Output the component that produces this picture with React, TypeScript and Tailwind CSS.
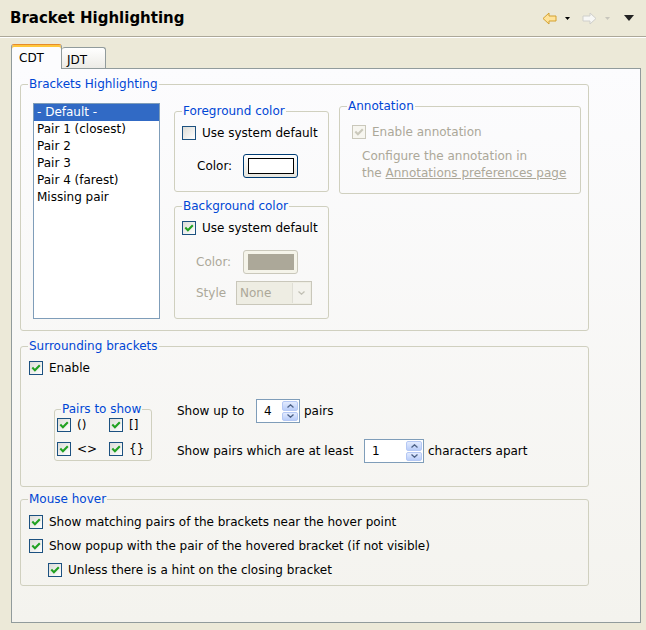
import type { ReactNode } from "react";
import clsx from "clsx";

const Box = ({ checked, disabled }: { checked?: boolean; disabled?: boolean }) => (
  <span
    className={clsx(
      "w-[14px] h-[14px] border flex items-center justify-center shrink-0",
      disabled
        ? "border-[#cac8bb] bg-[#f7f6f0]"
        : "border-[#1c5180] bg-gradient-to-br from-[#dcdcd7] to-white"
    )}
  >
    {checked && (
      <svg width="10" height="10" viewBox="0 0 10 10">
        <path
          d="M1.3 4.6 L3.9 7.2 L8.8 2.2"
          stroke={disabled ? "#cac8bb" : "#21a121"}
          strokeWidth="2.1"
          fill="none"
        />
      </svg>
    )}
  </span>
);

const CheckRow = ({
  label,
  checked = true,
  disabled,
  className,
}: {
  label: ReactNode;
  checked?: boolean;
  disabled?: boolean;
  className?: string;
}) => (
  <label className={clsx("flex items-center h-4 gap-[6px]", disabled && "text-[#aca899]", className)}>
    <Box checked={checked} disabled={disabled} />
    <span>{label}</span>
  </label>
);

const Group = ({
  title,
  className,
  legendClass,
  children,
}: {
  title: string;
  className?: string;
  legendClass?: string;
  children: ReactNode;
}) => (
  <fieldset className={clsx("border border-[#d0d0bf] rounded-[3px]", className)}>
    <legend className={clsx("px-px leading-4 text-[#0046d5]", legendClass)}>{title}</legend>
    {children}
  </fieldset>
);

const Chevron = ({ up, color = "#4d6185" }: { up?: boolean; color?: string }) => (
  <svg width="7" height="4" viewBox="0 0 7 4">
    <path d={up ? "M0.5 3.5 L3.5 0.8 L6.5 3.5" : "M0.5 0.5 L3.5 3.2 L6.5 0.5"} stroke={color} strokeWidth="1.3" fill="none" />
  </svg>
);

const Spinner = ({ value, width }: { value: string; width: string }) => (
  <div className={clsx("flex h-[24px] border border-[#7f9db9] bg-white", width)}>
    <span className="flex-1 flex items-center pl-[7px]">{value}</span>
    <div className="flex flex-col w-[17px] py-px pr-px gap-px">
      <span className="flex-1 flex items-center justify-center rounded-[2px] border border-[#b5c8f4] bg-gradient-to-b from-[#e3ebfe] to-[#b9cdf9]">
        <Chevron up />
      </span>
      <span className="flex-1 flex items-center justify-center rounded-[2px] border border-[#b5c8f4] bg-gradient-to-b from-[#e3ebfe] to-[#b9cdf9]">
        <Chevron />
      </span>
    </div>
  </div>
);

const ColorButton = ({ disabled }: { disabled?: boolean }) => (
  <div
    className={clsx(
      "w-[55px] h-[24px] rounded-[3px] border flex items-center justify-center",
      disabled ? "border-[#cac8bb] bg-[#f5f4ea]" : "border-[#003c74] bg-gradient-to-b from-white to-[#e6e5de]"
    )}
  >
    <span
      className={clsx(
        "w-[46px] h-[16px]",
        disabled ? "bg-[#aca899]" : "border border-black bg-white"
      )}
    />
  </div>
);

const items = ["- Default -", "Pair 1 (closest)", "Pair 2", "Pair 3", "Pair 4 (farest)", "Missing pair"];

export default function App() {
  return (
    <div className="w-[646px] h-[630px] bg-[#ece9d8] flex flex-col font-['DejaVu_Sans',sans-serif] text-[12px] text-black overflow-hidden">
      <header className="h-[36px] flex items-center justify-between pl-[10px] pr-[12px] shrink-0">
        <h1 className="text-[15px] font-bold">Bracket Highlighting</h1>
        <div className="flex items-center">
          <svg width="15" height="13" viewBox="0 0 15 13">
            <path d="M1 6.5 L7 1 L7 4 L14 4 L14 9 L7 9 L7 12 Z" fill="#ffe39a" stroke="#d3a131" strokeWidth="1" />
          </svg>
          <svg width="5" height="3" viewBox="0 0 5 3" className="ml-[8px]">
            <path d="M0 0 L5 0 L2.5 3 Z" fill="#000" />
          </svg>
          <svg width="15" height="13" viewBox="0 0 15 13" className="ml-[12px]">
            <path d="M14 6.5 L8 1 L8 4 L1 4 L1 9 L8 9 L8 12 Z" fill="#f7f7f5" stroke="#cfcfcb" strokeWidth="1" />
          </svg>
          <svg width="5" height="3" viewBox="0 0 5 3" className="ml-[8px]">
            <path d="M0 0 L5 0 L2.5 3 Z" fill="#c8c6bd" />
          </svg>
          <svg width="10" height="6" viewBox="0 0 10 6" className="ml-[14px]">
            <path d="M0 0 L10 0 L5 6 Z" fill="#222" />
          </svg>
        </div>
      </header>
      <div className="h-0 border-t border-[#aca899] border-b border-b-white shrink-0" />

      <div className="flex items-end ml-[11px] mt-[5px] h-[25px] relative z-10">
        <div className="w-[51px] h-[25px] -mb-px rounded-t-[3px] border border-b-0 border-[#919b9c] border-t-[#e68b2c] shadow-[inset_0_2px_0_#ffc73c] bg-[#fcfcfe] pl-[7px] pt-[5px] leading-4">
          CDT
        </div>
        <div className="w-[44px] h-[21px] rounded-t-[3px] border border-b-0 border-l-0 border-[#919b9c] bg-gradient-to-b from-white to-[#ecebe6] pl-[5px] pt-[4px] leading-4">
          JDT
        </div>
      </div>

      <div className="ml-[11px] w-[630px] h-[555px] border border-[#919b9c] bg-gradient-to-b from-[#fcfcfe] to-[#f4f3ee] pl-[8px] pt-[7px]">
        <Group title="Brackets Highlighting" className="w-[569px] pl-[12px] pb-[11px]" legendClass="-ml-[5px]">
          <div className="flex items-start mt-[6px]">
            <div className="mt-[5px] w-[127px] h-[216px] border border-[#7f9db9] bg-white">
              {items.map((t, i) => (
                <div key={t} className={clsx("leading-[17px] pl-[3px]", i === 0 && "bg-[#316ac5] text-white")}>
                  {t}
                </div>
              ))}
            </div>

            <div className="ml-[14px] mt-[5px] w-[155px] flex flex-col">
              <Group title="Foreground color" className="pl-[7px] pb-[13px]">
                <CheckRow label="Use system default" checked={false} className="mt-[6px]" />
                <div className="flex items-center mt-[13px] pl-[15px]">
                  <span className="w-[46px]">Color:</span>
                  <ColorButton />
                </div>
              </Group>
              <Group title="Background color" className="mt-[6px] pl-[7px] pb-[13px]">
                <CheckRow label="Use system default" className="mt-[6px]" />
                <div className="flex items-center mt-[14px] pl-[14px] text-[#aca899]">
                  <span className="w-[47px]">Color:</span>
                  <ColorButton disabled />
                </div>
                <div className="flex items-center mt-[7px] pl-[14px] text-[#aca899]">
                  <span className="w-[40px]">Style</span>
                  <div className="flex w-[76px] h-[24px] border border-[#c9c7ba] bg-[#eeede3]">
                    <span className="flex-1 flex items-center pl-[3px]">None</span>
                    <span className="w-[18px] my-px mr-px flex items-center justify-center bg-[#f3f2ec] border-l border-[#dfded5]">
                      <Chevron color="#c2c0b5" />
                    </span>
                  </div>
                </div>
              </Group>
            </div>

            <Group title="Annotation" className="ml-[10px] w-[242px] pl-[12px] pb-[11px]" legendClass="-ml-[5px]">
              <CheckRow label="Enable annotation" disabled className="mt-[10px]" />
              <div className="mt-[8px] pl-[10px] leading-[17px] text-[#aca899]">
                <div>Configure the annotation in</div>
                <div>
                  the <span className="underline">Annotations preferences page</span>
                </div>
              </div>
            </Group>
          </div>
        </Group>

        <Group title="Surrounding brackets" className="mt-[7px] w-[569px] pl-[8px] pb-[23px]" legendClass="-ml-px">
          <CheckRow label="Enable" className="mt-[6px]" />
          <div className="flex items-start mt-[23px]">
            <Group title="Pairs to show" className="mt-[2px] ml-[25px] w-[98px] pl-[2px] pb-[3px]" legendClass="ml-[4px]">
              <div className="grid grid-cols-[52px_1fr] gap-y-[8px]">
                <CheckRow label="()" />
                <CheckRow label="[]" />
                <CheckRow label="<>" />
                <CheckRow label="{}" />
              </div>
            </Group>
            <div className="ml-[25px] flex flex-col gap-[16px]">
              <div className="flex items-center h-[24px]">
                <span className="w-[79px]">Show up to</span>
                <Spinner value="4" width="w-[44px]" />
                <span className="ml-[4px]">pairs</span>
              </div>
              <div className="flex items-center h-[24px]">
                <span className="w-[187px]">Show pairs which are at least</span>
                <Spinner value="1" width="w-[60px]" />
                <span className="ml-[4px]">characters apart</span>
              </div>
            </div>
          </div>
        </Group>

        <Group title="Mouse hover" className="mt-[4px] w-[569px] pl-[8px] pb-[7px]" legendClass="-ml-px">
          <div className="mt-[7px] flex flex-col gap-[8px]">
            <CheckRow label="Show matching pairs of the brackets near the hover point" />
            <CheckRow label="Show popup with the pair of the hovered bracket (if not visible)" />
            <CheckRow label="Unless there is a hint on the closing bracket" className="ml-[19px]" />
          </div>
        </Group>
      </div>
    </div>
  );
}
